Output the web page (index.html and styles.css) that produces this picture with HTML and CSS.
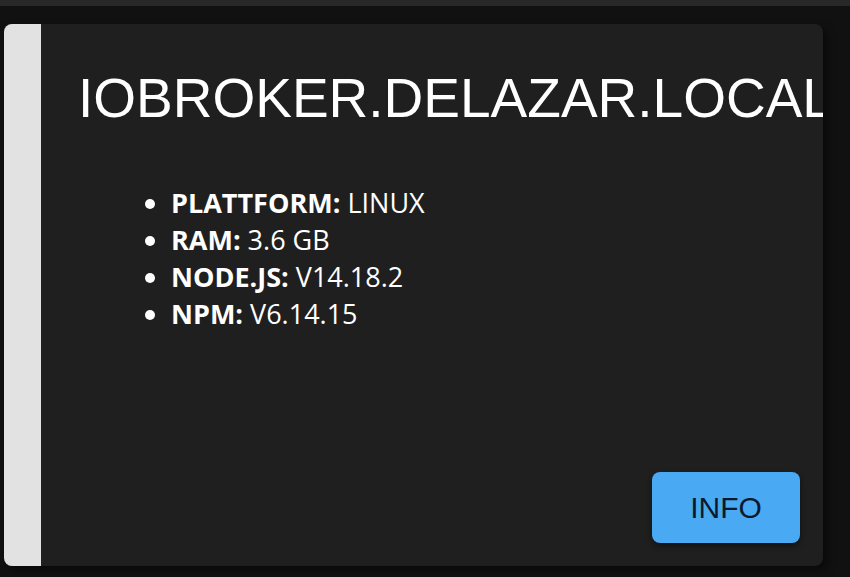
FILE: index.html
```html
<!DOCTYPE html>
<html lang="de">
<head>
    <meta charset="utf-8">
    <meta name="viewport" content="width=device-width, initial-scale=1.0">
    <title>ioBroker Host</title>
    <link rel="stylesheet" href="styles.css">
</head>

<body>
    <div class="topbar"></div>
    <main>
        <article class="host">
            <div class="streifen"></div>
            <div class="inhalt">
                <h1 class="hostname">IOBROKER.DELAZAR.LOCAL</h1>
                <ul class="details">
                    <li><b>PLATTFORM:</b> LINUX</li>
                    <li><b>RAM:</b> 3.6 GB</li>
                    <li><b>NODE.JS:</b> V14.18.2</li>
                    <li><b>NPM:</b> V6.14.15</li>
                </ul>
                <button class="info">INFO</button>
            </div>
        </article>
    </main>
</body>
</html>
```

FILE: styles.css
```css
* {
    box-sizing: border-box;
}

body {
    margin: 0;
    background-color: #111111;
    height: 577px;
    overflow: hidden;
}

.topbar {
    height: 6px;
    background-color: #282828;
}

main {
    padding: 18px 27px 0 4px;
}

.host {
    display: flex;
    height: 542px;
    background-color: #1f1f1f;
    border-radius: 8px;
    overflow: hidden;
    box-shadow: 4px 4px 10px rgba(0, 0, 0, 0.5);
}

.streifen {
    width: 37px;
    flex-shrink: 0;
    background-color: #e2e2e2;
}

.inhalt {
    flex: 1;
    min-width: 0;
    display: flex;
    flex-direction: column;
    padding: 42px 23px 23px 37px;
}

/* hostname läuft rechts aus der karte raus, wie im original */
.hostname {
    font-family: 'Liberation Sans', Arial, sans-serif;
    font-weight: normal;
    font-size: 55px;
    line-height: 64px;
    color: #ffffff;
    margin: 0;
    white-space: nowrap;
}

.details {
    font-family: 'Open Sans', 'Noto Sans', sans-serif;
    font-size: 27px;
    line-height: 37px;
    color: #ffffff;
    margin: 54px 0 0 0;
    padding-left: 93px;
}

.details b {
    font-weight: 700;
}

.info {
    margin-top: auto;
    align-self: flex-end;
    width: 148px;
    height: 71px;
    border: none;
    border-radius: 8px;
    background-color: #4aa9f3;
    color: #0a1a2c;
    font-family: 'Liberation Sans', Arial, sans-serif;
    font-size: 30px;
    box-shadow: 0 3px 6px rgba(0, 0, 0, 0.45);
    cursor: pointer;
}
```
